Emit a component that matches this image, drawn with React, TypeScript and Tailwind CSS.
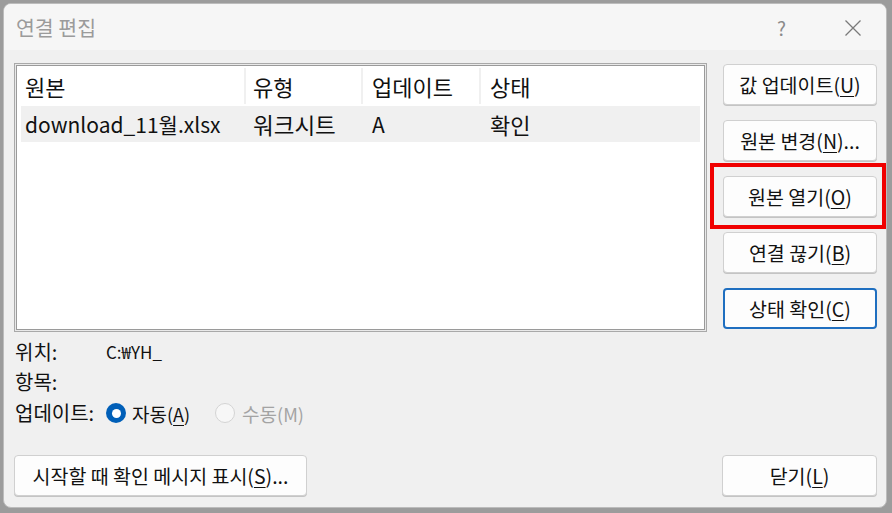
import React from "react";

const font = { fontFamily: '"Noto Sans CJK KR", "Noto Sans", sans-serif' };

function Btn({ children, primary = false, className = "" }: { children: React.ReactNode; primary?: boolean; className?: string }) {
  return (
    <div
      className={
        "h-[41px] flex items-center justify-center rounded-[4px] bg-[#fdfdfd] text-[19.5px] text-[#111] leading-none " +
        (primary ? "border-2 border-[#1f6fc0] " : "border border-[#d0d0d0] shadow-[0_1px_0_#c4c4c4] ") +
        className
      }
    >
      {children}
    </div>
  );
}

function U({ c }: { c: string }) {
  return <span className="underline underline-offset-[3px] decoration-1">{c}</span>;
}

export default function App() {
  return (
    <div className="w-[892px] h-[513px] bg-[#9c9c9c] pt-[3px] pl-[3px] pr-[5px] pb-[5px]" style={font}>
      <div className="w-full h-full bg-[#f0f0f0] rounded-[8px] border border-[#bcbcbc] flex flex-col overflow-hidden">
        {/* Title bar */}
        <div className="h-[46px] bg-[#f6f6f6] flex items-center pl-[12px] pr-[24px]">
          <span className="text-[20.5px] text-[#9b9b9b] leading-none">연결 편집</span>
          <div className="flex-1" />
          <span className="text-[19px] text-[#8a8a8a] leading-none mr-[58px]">?</span>
          <svg width="18" height="18" viewBox="0 0 18 18" className="mt-[1px]">
            <path d="M1.5 1.5 L16.5 16.5 M16.5 1.5 L1.5 16.5" stroke="#7a7a7a" strokeWidth="1.3" />
          </svg>
        </div>

        {/* Body */}
        <div className="flex-1 flex flex-col pl-[10px] pr-[9px] pt-[13px]">
          <div className="flex">
            {/* Left */}
            <div className="w-[693px] flex flex-col">
              <div className="h-[269px] border border-[#a9a9a9] p-[1px] bg-[#e9e9e9]">
                <div className="h-full border border-[#9a9a9a] bg-white px-[4px] pt-[2px]">
                  <div className="flex h-[36px] items-center text-[22px] text-[#111] leading-none">
                    <div className="w-[225px] h-full flex items-center pl-[4px] border-r-2 border-[#f0f0f0]">원본</div>
                    <div className="w-[117px] h-full flex items-center pl-[7px] border-r-2 border-[#f0f0f0]">유형</div>
                    <div className="w-[118px] h-full flex items-center pl-[9px] border-r-2 border-[#f0f0f0]">업데이트</div>
                    <div className="flex-1 h-full flex items-center pl-[9px]">상태</div>
                  </div>
                  <div className="flex h-[36px] mt-[2px] items-center text-[22px] text-[#111] leading-none bg-[#f0f0f0]">
                    <div className="w-[225px] pl-[4px] text-[21px]">download_11월.xlsx</div>
                    <div className="w-[117px] pl-[7px] text-[22.5px]">워크시트</div>
                    <div className="w-[118px] pl-[9px] text-[21px]">A</div>
                    <div className="flex-1 pl-[9px]">확인</div>
                  </div>
                </div>
              </div>

              <div className="flex flex-col text-[20px] text-[#111] leading-none mt-[10px] gap-[11px]">
                <div className="h-[19px] flex items-center">
                  <span className="w-[92px] pl-[1px]">위치:</span>
                  <span className="text-[17px]">C:₩YH_</span>
                </div>
                <div className="h-[19px] flex items-center">
                  <span className="w-[92px] pl-[1px]">항목:</span>
                </div>
                <div className="h-[22px] flex items-center">
                  <span className="w-[92px] pl-[1px]">업데이트:</span>
                  <span className="w-[20px] h-[20px] rounded-full bg-[#005fb8] flex items-center justify-center">
                    <span className="w-[9px] h-[9px] rounded-full bg-white" />
                  </span>
                  <span className="ml-[6px] text-[19px]">
                    자동<span className="text-[18px]">(<U c="A" />)</span>
                  </span>
                  <span className="ml-[25px] w-[20px] h-[20px] rounded-full bg-[#f7f7f7] border border-[#d4d4d4]" />
                  <span className="ml-[7px] text-[19px] text-[#a3a3a3]">
                    수동<span className="text-[18px]">(M)</span>
                  </span>
                </div>
              </div>
            </div>

            {/* Right */}
            <div className="flex-1 flex flex-col pl-[16px] gap-[15px] pt-[1px]">
              <Btn>
                값 업데이트(<U c="U" />)
              </Btn>
              <Btn>
                원본 변경(<U c="N" />)...
              </Btn>
              <div className="relative">
                <Btn>
                  원본 열기(<U c="O" />)
                </Btn>
                <div className="absolute left-[-13px] right-[-9px] top-[-13px] bottom-[-12px] border-[4px] border-[#f00000]" />
              </div>
              <Btn>
                연결 끊기(<U c="B" />)
              </Btn>
              <Btn primary>
                상태 확인(<U c="C" />)
              </Btn>
            </div>
          </div>

          <div className="flex-1" />
          <div className="flex justify-between pb-[11px]">
            <Btn className="w-[293px]">
              시작할 때 확인 메시지 표시(<U c="S" />)...
            </Btn>
            <Btn className="w-[155px]">
              닫기(<U c="L" />)
            </Btn>
          </div>
        </div>
      </div>
    </div>
  );
}
